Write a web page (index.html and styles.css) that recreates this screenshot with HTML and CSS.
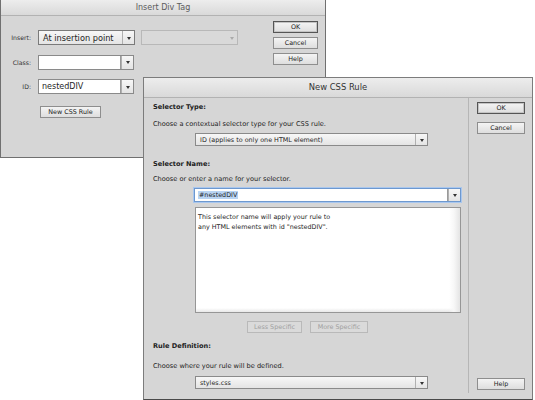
FILE: index.html
```html
<!DOCTYPE html>
<html lang="en">

<head>
    <meta charset="UTF-8">
    <meta name="viewport" content="width=device-width, initial-scale=1.0">
    <title>Insert Div Tag / New CSS Rule</title>
    <link rel="stylesheet" href="styles.css">
</head>

<body>
    <div class="desk">

        <!-- Insert Div Tag dialog -->
        <div class="dialog div-tag">
            <div class="titlebar">Insert Div Tag</div>
            <div class="dlg-body">
                <div class="div-form">
                    <span class="lbl">Insert:</span>
                    <div class="ctl-line">
                        <div class="select big">At insertion point<span class="arrow"></span></div>
                        <div class="select big disabled"><span class="arrow"></span></div>
                    </div>

                    <span class="lbl">Class:</span>
                    <div class="ctl-line">
                        <div class="combo big"><span class="combo-text"></span><span class="arrow"></span></div>
                    </div>

                    <span class="lbl">ID:</span>
                    <div class="ctl-line">
                        <div class="combo big"><span class="combo-text">nestedDIV</span><span class="arrow"></span></div>
                    </div>

                    <span></span>
                    <div class="ctl-line">
                        <button class="btn new-rule">New CSS Rule</button>
                    </div>
                </div>

                <div class="side-btns">
                    <button class="btn default">OK</button>
                    <button class="btn">Cancel</button>
                    <button class="btn">Help</button>
                </div>
            </div>
        </div>

        <!-- New CSS Rule dialog -->
        <div class="dialog css-rule">
            <div class="titlebar big-title">New CSS Rule</div>
            <div class="dlg-body">
                <div class="rule-main">
                    <div class="heading">Selector Type:</div>
                    <div class="hint">Choose a contextual selector type for your CSS rule.</div>
                    <div class="select wide type-pick">ID (applies to only one HTML element)<span class="arrow"></span></div>

                    <div class="heading name-head">Selector Name:</div>
                    <div class="hint name-hint">Choose or enter a name for your selector.</div>
                    <div class="combo focused"><span class="combo-text"><span class="picked">#nestedDIV</span></span><span class="arrow"></span></div>
                    <div class="info-box">
                        This selector name will apply your rule to<br>
                        any HTML elements with id "nestedDIV".
                    </div>
                    <div class="specific-row">
                        <button class="btn off">Less Specific</button>
                        <button class="btn off">More Specific</button>
                    </div>

                    <div class="heading rule-def">Rule Definition:</div>
                    <div class="hint def-hint">Choose where your rule will be defined.</div>
                    <div class="select wide file-pick">styles.css<span class="arrow"></span></div>
                </div>

                <div class="rule-side">
                    <button class="btn default">OK</button>
                    <button class="btn">Cancel</button>
                    <button class="btn help">Help</button>
                </div>
            </div>
        </div>

    </div>
</body>

</html>
```

FILE: styles.css
```css
* {
    box-sizing: border-box;
}

body {
    margin: 0;
    background: #fff;
    font-family: "DejaVu Sans", "Liberation Sans", sans-serif;
    color: #1e1e1e;
}

.desk {
    position: relative;
    width: 535px;
    height: 400px;
    overflow: hidden;
}

/* windows on the desktop */
.dialog {
    position: absolute;
    display: flex;
    flex-direction: column;
    background: #d6d6d6;
    border: 1px solid #707070;
}

.div-tag {
    left: 0;
    top: 0;
    width: 326px;
    height: 158px;
    border-top: none;
}

.css-rule {
    left: 143px;
    top: 77px;
    width: 390px;
    height: 323px;
    border-color: #7c7c7c;
    border-bottom-color: #4a4a4a;
}

.titlebar {
    height: 16px;
    flex-shrink: 0;
    background: linear-gradient(#ededed, #d9d9d9);
    border-bottom: 1px solid #b2b2b2;
    text-align: center;
    font-size: 8px;
    line-height: 16px;
    color: #5c5c5c;
}

.big-title {
    height: 20px;
    line-height: 19px;
    font-size: 8.4px;
    color: #333;
}

.dlg-body {
    flex: 1;
    display: flex;
}

/* Insert Div Tag */
.div-form {
    display: grid;
    grid-template-columns: 30px auto;
    column-gap: 7px;
    row-gap: 9.5px;
    grid-auto-rows: 15px;
    padding-top: 14px;
    align-items: center;
    align-content: start;
}

.lbl {
    text-align: right;
    font-size: 6.2px;
    color: #333;
}

.ctl-line {
    display: flex;
    gap: 6px;
    height: 15px;
    align-items: center;
}

.select,
.combo {
    position: relative;
    display: flex;
    align-items: center;
    height: 13px;
    border: 1px solid #8a8a8a;
    background: linear-gradient(#f7f7f7, #e4e4e4);
    font-size: 6.4px;
    padding-left: 4px;
    white-space: nowrap;
}

.select.big {
    width: 97px;
    height: 15px;
    font-size: 8.2px;
    border-color: #7a7a7a;
    padding-left: 4px;
}

.select.disabled {
    border-color: #b8b8b8;
    background: #d9d9d9;
}

.arrow {
    position: absolute;
    right: 0;
    top: 0;
    bottom: 0;
    width: 12px;
    border-left: 1px solid #b0b0b0;
}

.arrow::after {
    content: "";
    position: absolute;
    left: 4px;
    top: 50%;
    margin-top: -1px;
    border-left: 2px solid transparent;
    border-right: 2px solid transparent;
    border-top: 3px solid #333;
}

.disabled .arrow {
    border-left-color: transparent;
}

.disabled .arrow::after {
    border-top-color: #aaa;
}

.combo {
    padding-left: 0;
}

.combo.big {
    width: 96px;
    height: 15px;
    font-size: 8px;
    border-color: #8a8a8a;
}

.combo-text {
    flex: 1;
    align-self: stretch;
    display: flex;
    align-items: center;
    padding-left: 3px;
    margin-right: 12px;
    background: #fff;
    border-right: 1px solid #9a9a9a;
}

.btn {
    font-family: inherit;
    font-size: 6.4px;
    color: #222;
    height: 12px;
    padding: 0;
    border: 1px solid #8e8e8e;
    background: linear-gradient(#f4f4f4, #dedede);
    border-radius: 0;
}

.btn.default {
    border-color: #555;
    box-shadow: inset 0 0 0 1px #c4c4c4;
}

.new-rule {
    width: 61px;
    margin-left: 2px;
    margin-top: 1px;
}

.side-btns {
    margin-left: auto;
    margin-right: 7px;
    padding-top: 5px;
    display: flex;
    flex-direction: column;
    gap: 4px;
}

.side-btns .btn {
    width: 45px;
}

/* New CSS Rule */
.rule-main {
    width: 325px;
    padding: 4px 0 0 9px;
    display: flex;
    flex-direction: column;
    border-right: 1px solid #b6b6b6;
    margin-bottom: 6px;
}

.heading {
    font-size: 6.6px;
    font-weight: bold;
    line-height: 10px;
    color: #222;
}

.hint {
    font-size: 6.6px;
    line-height: 10px;
    margin-top: 7px;
    color: #222;
}

.name-head {
    margin-top: 13px;
}

.name-hint {
    margin-top: 5px;
}

.rule-main .select,
.rule-main .combo,
.info-box {
    margin-left: 42px;
}

.select.wide {
    width: 233px;
}

.type-pick {
    margin-top: 4px;
}

.combo.focused {
    width: 267px;
    height: 14px;
    margin-left: 41px;
    margin-top: 4px;
    border-color: #6d98cf;
    box-shadow: 0 0 0 1px #a9c7ee;
    background: linear-gradient(#f7f7f7, #e4e4e4);
}

.picked {
    background: #b9d4f3;
    padding: 0 1px;
}

.info-box {
    width: 266px;
    height: 106px;
    margin-top: 5px;
    border: 1px solid #969696;
    background:
        linear-gradient(to left, #e4e4e4, #f7f7f7 6px, rgba(255, 255, 255, 0) 11px),
        linear-gradient(to top, #e8e8e8, rgba(255, 255, 255, 0) 4px),
        #fff;
    font-size: 6.4px;
    line-height: 9.5px;
    padding: 5px 2px;
}

.specific-row {
    display: flex;
    gap: 8px;
    margin: 8px 0 0 94px;
}

.btn.off {
    color: #a0a0a0;
    border-color: #b9b9b9;
    background: #dadada;
}

.specific-row .btn:first-child {
    width: 55px;
}

.specific-row .btn:last-child {
    width: 58px;
}

.rule-def {
    margin-top: 8px;
}

.def-hint {
    margin-top: 10px;
}

.file-pick {
    margin-top: 5px;
}

.rule-side {
    flex: 1;
    display: flex;
    flex-direction: column;
    gap: 8px;
    padding: 4px 0 9px 8px;
}

.rule-side .btn {
    width: 48px;
}

.rule-side .help {
    margin-top: auto;
}
```
